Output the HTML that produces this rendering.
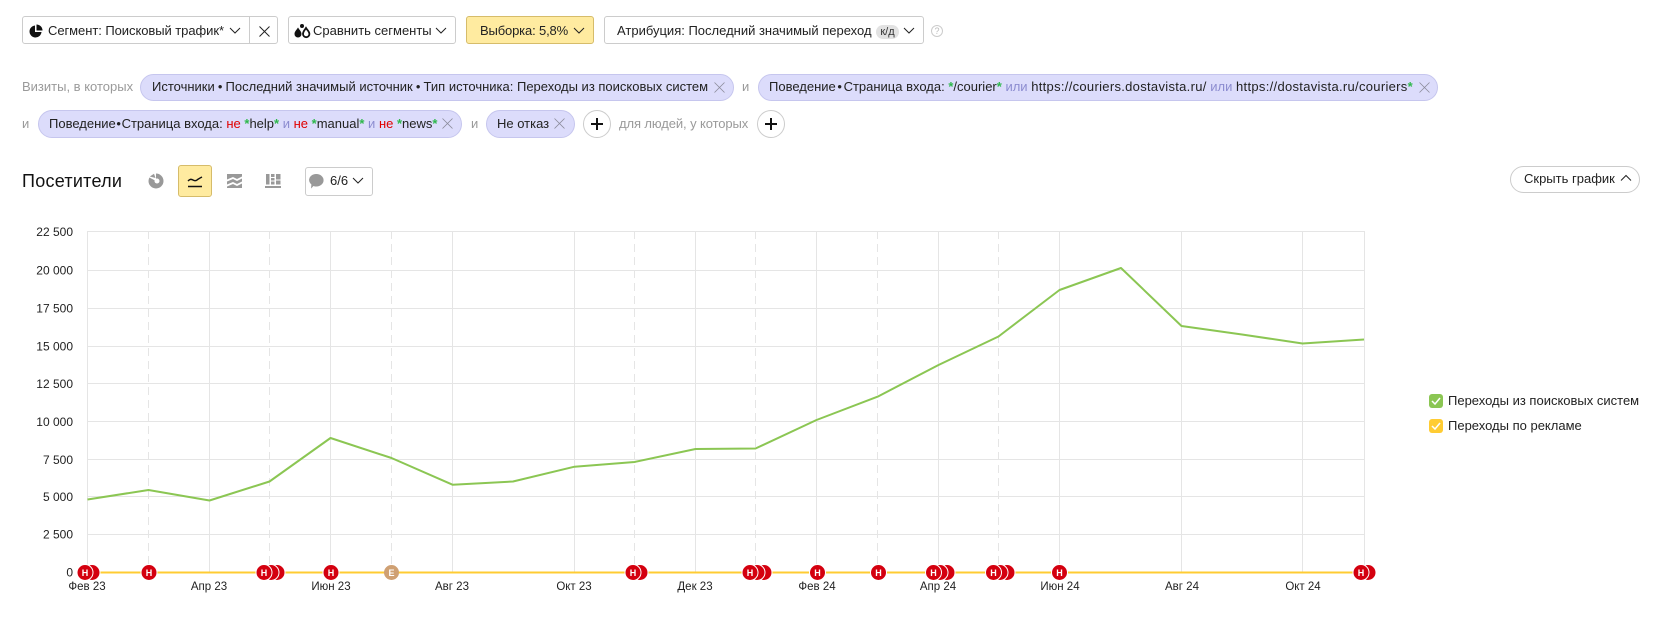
<!DOCTYPE html>
<html lang="ru">
<head>
<meta charset="utf-8">
<title>Посетители</title>
<style>
html,body{margin:0;padding:0;background:#fff;}
body{position:relative;width:1663px;height:643px;overflow:hidden;font-family:"Liberation Sans",Arial,sans-serif;font-size:13px;color:#222;}
.a{position:absolute;white-space:nowrap;}
.btn{position:absolute;box-sizing:border-box;background:#fff;border:1px solid #ccc;border-radius:3px;height:28px;}
.t{position:absolute;white-space:nowrap;line-height:16px;}
.pill{position:absolute;box-sizing:border-box;height:27px;background:#dcdcfb;border:1px solid #c6c6ee;border-radius:14px;}
.g{color:#9a9a9a;}
.r{color:#e00000;}
.s{color:#2eb84b;font-weight:bold;}
.o{color:#8c8cd0;}
.u{letter-spacing:.3px;}
.b{margin:0 -2px;}
.b3{margin:0 -3px;}
.b1{margin:0 -.5px;}
svg{position:absolute;overflow:visible;}
.plus{position:absolute;box-sizing:border-box;width:28px;height:28px;border:1px solid #ccc;border-radius:50%;background:#fff;}
</style>
</head>
<body>

<!-- Top row -->
<div class="btn" style="left:22px;top:16px;width:256px;"></div>
<div class="a" style="left:249px;top:16px;width:1px;height:28px;background:#ccc;"></div>
<svg style="left:29px;top:24px" width="14" height="14" viewBox="0 0 14 14"><path d="M6 1.500A6 6 0 1 0 12.500 8H6Z" fill="#111"/><path d="M7.500 0.500A6 6 0 0 1 13.500 6.500H7.500Z" fill="#111"/></svg>
<div class="t" style="left:48px;top:23px;letter-spacing:-.06px;">Сегмент: Поисковый трафик*</div>
<svg style="left:229px;top:27px" width="12" height="8" viewBox="0 0 12 8"><path d="M1 1l5 5 5-5" fill="none" stroke="#222" stroke-width="1"/></svg>
<svg style="left:259px;top:26px" width="11" height="11" viewBox="0 0 11 11"><path d="M.5.5l10 10M10.500.5l-10 10" fill="none" stroke="#222" stroke-width="1"/></svg>

<div class="btn" style="left:288px;top:16px;width:168px;"></div>
<svg style="left:293px;top:23px" width="17" height="16" viewBox="0 0 17 16"><path d="M5 4.500C3.500 7 1.500 8.500 1.500 11a3.500 3.500 0 0 0 7 0C8.500 8.500 6.500 7 5 4.500Z" fill="#111"/><path d="M13 5C11.800 7 10 8.500 10 11a3.200 3.200 0 0 0 6.400 0C16.400 8.500 14.200 7 13 5Z" fill="none" stroke="#111" stroke-width="1.800"/><circle cx="9" cy="3" r="2" fill="#111"/></svg>
<div class="t" style="left:313px;top:23px;">Сравнить сегменты</div>
<svg style="left:435px;top:27px" width="12" height="8" viewBox="0 0 12 8"><path d="M1 1l5 5 5-5" fill="none" stroke="#222" stroke-width="1"/></svg>

<div class="btn" style="left:466px;top:16px;width:128px;background:#ffeba0;border-color:#d6bc6a;"></div>
<div class="t" style="left:480px;top:23px;letter-spacing:-.15px;">Выборка: 5,8%</div>
<svg style="left:573px;top:27px" width="12" height="8" viewBox="0 0 12 8"><path d="M1 1l5 5 5-5" fill="none" stroke="#222" stroke-width="1"/></svg>

<div class="btn" style="left:604px;top:16px;width:320px;"></div>
<div class="t" style="left:617px;top:23px;">Атрибуция: Последний значимый переход</div>
<div class="a" style="left:876px;top:25px;width:23px;height:14px;line-height:14px;border-radius:7px;background:#e2e2e2;font-size:11px;text-align:center;color:#333;">к/д</div>
<svg style="left:903px;top:27px" width="12" height="8" viewBox="0 0 12 8"><path d="M1 1l5 5 5-5" fill="none" stroke="#222" stroke-width="1"/></svg>
<div class="a" style="left:931px;top:25px;width:12px;height:12px;box-sizing:border-box;border:1px solid #ccc;border-radius:50%;font-size:9px;line-height:10px;text-align:center;color:#bbb;">?</div>

<!-- Filters row 1 -->
<div class="t g" style="left:22px;top:79px;">Визиты, в которых</div>
<div class="pill" style="left:140px;top:74px;width:594px;"></div>
<div class="t" style="left:152px;top:79px;">Источники <span class="b1">•</span> Последний значимый источник <span class="b1">•</span> Тип источника: Переходы из поисковых систем</div>
<svg style="left:714px;top:82px" width="11" height="11" viewBox="0 0 11 11"><path d="M.5.5l10 10M10.500.5l-10 10" fill="none" stroke="#8a8a9a" stroke-width=".8"/></svg>
<div class="t g" style="left:742px;top:79px;">и</div>
<div class="pill" style="left:758px;top:74px;width:680px;"></div>
<div class="t" style="left:769px;top:79px;">Поведение <span class="b">•</span> Страница входа: <span class="s">*</span>/courier<span class="s">*</span> <span class="o">или</span> <span class="u">https://couriers.dostavista.ru/</span> <span class="o">или</span> <span class="u">https://dostavista.ru/couriers</span><span class="s">*</span></div>
<svg style="left:1419px;top:82px" width="11" height="11" viewBox="0 0 11 11"><path d="M.5.5l10 10M10.500.5l-10 10" fill="none" stroke="#8a8a9a" stroke-width=".8"/></svg>

<!-- Filters row 2 -->
<div class="t g" style="left:22px;top:116px;">и</div>
<div class="pill" style="left:38px;top:110px;width:424px;height:28px;"></div>
<div class="t" style="left:49px;top:116px;">Поведение <span class="b3">•</span> Страница входа: <span class="r">не</span> <span class="s">*</span>help<span class="s">*</span> <span class="o">и</span> <span class="r">не</span> <span class="s">*</span>manual<span class="s">*</span> <span class="o">и</span> <span class="r">не</span> <span class="s">*</span>news<span class="s">*</span></div>
<svg style="left:442px;top:118px" width="11" height="11" viewBox="0 0 11 11"><path d="M.5.5l10 10M10.500.5l-10 10" fill="none" stroke="#8a8a9a" stroke-width=".8"/></svg>
<div class="t g" style="left:471px;top:116px;">и</div>
<div class="pill" style="left:486px;top:110px;width:89px;height:28px;"></div>
<div class="t" style="left:497px;top:116px;">Не отказ</div>
<svg style="left:554px;top:118px" width="11" height="11" viewBox="0 0 11 11"><path d="M.5.5l10 10M10.500.5l-10 10" fill="none" stroke="#8a8a9a" stroke-width=".8"/></svg>
<div class="plus" style="left:583px;top:110px;"></div>
<svg style="left:590px;top:117px" width="14" height="14" viewBox="0 0 14 14"><path d="M7 1v12M1 7h12" stroke="#111" stroke-width="2" fill="none"/></svg>
<div class="t g" style="left:619px;top:116px;letter-spacing:-.1px;">для людей, у которых</div>
<div class="plus" style="left:757px;top:110px;"></div>
<svg style="left:764px;top:117px" width="14" height="14" viewBox="0 0 14 14"><path d="M7 1v12M1 7h12" stroke="#111" stroke-width="2" fill="none"/></svg>

<!-- Chart header -->
<div class="a" style="left:22px;top:171px;font-size:18px;line-height:21px;color:#111;letter-spacing:.25px;">Посетители</div>
<svg style="left:148px;top:173px" width="16" height="16" viewBox="0 0 16 16"><path d="M8 0.500a7.500 7.500 0 1 1-7.500 7.500 7.500 7.500 0 0 1 .9-3.500L8 8Z" fill="#999"/><circle cx="9" cy="8" r="2.500" fill="#fff"/><path d="M1.800 3.500L6 .8 7.500 5Z" fill="#999"/></svg>
<div class="btn" style="left:178px;top:165px;width:34px;height:32px;background:#ffeba0;border-color:#d6bc6a;"></div>
<svg style="left:187px;top:175px" width="16" height="13" viewBox="0 0 16 13"><path d="M1 6c2-2 3-2 5-1s3 1 4 0 3-2 5-3" fill="none" stroke="#111" stroke-width="1.500"/><path d="M1 11.500h14" stroke="#111" stroke-width="1.500"/></svg>
<svg style="left:227px;top:173px" width="15" height="15" viewBox="0 0 15 15"><path d="M0 1h15v2.500L10 6 6 4 0 6.500Z" fill="#999"/><path d="M0 8.500L6 6l4 2 5-2.500v3L10 11 6 9 0 11.500Z" fill="#999"/><path d="M0 13.500L6 11l4 2 5-2.500V15H0Z" fill="#999"/></svg>
<svg style="left:265px;top:173px" width="16" height="16" viewBox="0 0 16 16"><path d="M1 1h3.500v10.500H1ZM6 5h3.500v2.500H6ZM6 8.500h3.500v3H6ZM6 1h3.500v3H6ZM11 1h4.500v5.500H11ZM11 7.500h4.500v4H11ZM0 13h16v2H0Z" fill="#999"/></svg>
<div class="btn" style="left:305px;top:167px;width:68px;height:29px;"></div>
<svg style="left:309px;top:173px" width="15" height="16" viewBox="0 0 15 16"><path d="M7.500 1a6.800 6 0 0 1 0 12.500c-1 0-2 0-3-.5L2 15.500l.4-4A6.800 6 0 0 1 7.500 1Z" fill="#999"/></svg>
<div class="t" style="left:330px;top:173px;color:#222;">6/6</div>
<svg style="left:352px;top:177px" width="12" height="8" viewBox="0 0 12 8"><path d="M1 1l5 5 5-5" fill="none" stroke="#222" stroke-width="1"/></svg>

<div class="a" style="left:1510px;top:166px;width:130px;height:27px;box-sizing:border-box;border:1px solid #ccc;border-radius:14px;"></div>
<div class="t" style="left:1524px;top:171px;">Скрыть график</div>
<svg style="left:1620px;top:174px" width="12" height="8" viewBox="0 0 12 8"><path d="M1 6.500l5-5 5 5" fill="none" stroke="#222" stroke-width="1"/></svg>

<!-- Chart -->
<svg style="left:0;top:0" width="1663" height="643" viewBox="0 0 1663 643">
<g stroke="#e5e5e5" stroke-width="1" fill="none">
<path d="M87 231.500H1364.500M87 270.500H1364.500M87 308.500H1364.500M87 346.500H1364.500M87 383.500H1364.500M87 421.500H1364.500M87 459.500H1364.500M87 496.500H1364.500M87 534.500H1364.500"/>
<path d="M87.500 231V573M209.500 231V573M330.500 231V573M452.500 231V573M574.500 231V573M695.500 231V573M816.500 231V573M938.500 231V573M1059.500 231V573M1181.500 231V573M1302.500 231V573M1364.500 231V573"/>
<path stroke-dasharray="8 5" d="M148.500 231V573M269.500 231V573M391.500 231V573M634.500 231V573M755.500 231V573M877.500 231V573M998.500 231V573"/>
</g>
<path d="M87 572.500H1364" stroke="#fc3" stroke-width="2" fill="none"/>
<polyline fill="none" stroke="#8bc653" stroke-width="2" stroke-linejoin="round" points="87.500,499.500 148.500,490 209.500,500.500 269.500,481.500 330.500,438 391.500,458 452.500,484.700 513,481.500 574.500,466.700 634.500,462 695.500,449 755.500,448.500 816.500,420 877.500,396.700 938.500,365 998.500,336.500 1059.500,290 1121,268 1181.500,326 1242,334.500 1302.500,343.500 1364,339.500"/>

<g font-family="'Liberation Sans',Arial,sans-serif" font-size="12" fill="#222" text-anchor="end">
<text x="73" y="236">22 500</text>
<text x="73" y="274.500">20 000</text>
<text x="73" y="312.500">17 500</text>
<text x="73" y="350.500">15 000</text>
<text x="73" y="388">12 500</text>
<text x="73" y="426">10 000</text>
<text x="73" y="464">7 500</text>
<text x="73" y="501">5 000</text>
<text x="73" y="538.500">2 500</text>
<text x="73" y="576.500">0</text>
</g>
<g font-family="'Liberation Sans',Arial,sans-serif" font-size="11.500" fill="#222" text-anchor="middle">
<text x="87" y="590">Фев 23</text>
<text x="209" y="590">Апр 23</text>
<text x="331" y="590">Июн 23</text>
<text x="452" y="590">Авг 23</text>
<text x="574" y="590">Окт 23</text>
<text x="695" y="590">Дек 23</text>
<text x="817" y="590">Фев 24</text>
<text x="938" y="590">Апр 24</text>
<text x="1060" y="590">Июн 24</text>
<text x="1182" y="590">Авг 24</text>
<text x="1303" y="590">Окт 24</text>
</g>

<g stroke="#fff" stroke-width="1" fill="#d4000f">
<circle cx="92" cy="572.500" r="8"/><circle cx="85" cy="572.500" r="8"/>
<circle cx="149" cy="572.500" r="8"/>
<circle cx="277" cy="572.500" r="8"/><circle cx="271" cy="572.500" r="8"/><circle cx="264" cy="572.500" r="8"/>
<circle cx="331" cy="572.500" r="8"/>
<circle cx="640" cy="572.500" r="8"/><circle cx="633" cy="572.500" r="8"/>
<circle cx="764" cy="572.500" r="8"/><circle cx="757" cy="572.500" r="8"/><circle cx="750" cy="572.500" r="8"/>
<circle cx="817.500" cy="572.500" r="8"/>
<circle cx="878.500" cy="572.500" r="8"/>
<circle cx="947" cy="572.500" r="8"/><circle cx="940" cy="572.500" r="8"/><circle cx="933.500" cy="572.500" r="8"/>
<circle cx="1007" cy="572.500" r="8"/><circle cx="1000" cy="572.500" r="8"/><circle cx="993.500" cy="572.500" r="8"/>
<circle cx="1059.500" cy="572.500" r="8"/>
<circle cx="1368" cy="572.500" r="8"/><circle cx="1361" cy="572.500" r="8"/>
</g>
<circle cx="391.500" cy="572.500" r="7.500" fill="#cfa073"/>
<g font-family="'Liberation Sans',Arial,sans-serif" font-size="9" font-weight="bold" fill="#fff" text-anchor="middle">
<text x="85" y="576">Н</text>
<text x="149" y="576">Н</text>
<text x="264" y="576">Н</text>
<text x="331" y="576">Н</text>
<text x="633" y="576">Н</text>
<text x="750" y="576">Н</text>
<text x="817.500" y="576">Н</text>
<text x="878.500" y="576">Н</text>
<text x="933.500" y="576">Н</text>
<text x="993.500" y="576">Н</text>
<text x="1059.500" y="576">Н</text>
<text x="1361" y="576">Н</text>
<text x="391.500" y="576">Е</text>
</g>
</svg>

<!-- Legend -->
<svg style="left:1429px;top:394px" width="14" height="14" viewBox="0 0 14 14"><rect width="14" height="14" rx="3" fill="#8bc653"/><path d="M3 7l3 3 5-6" fill="none" stroke="#fff" stroke-width="1.500"/></svg>
<div class="t" style="left:1448px;top:393px;font-size:13px;">Переходы из поисковых систем</div>
<svg style="left:1429px;top:419px" width="14" height="14" viewBox="0 0 14 14"><rect width="14" height="14" rx="3" fill="#fc3"/><path d="M3 7l3 3 5-6" fill="none" stroke="#fff" stroke-width="1.500"/></svg>
<div class="t" style="left:1448px;top:418px;font-size:13px;">Переходы по рекламе</div>

</body>
</html>
